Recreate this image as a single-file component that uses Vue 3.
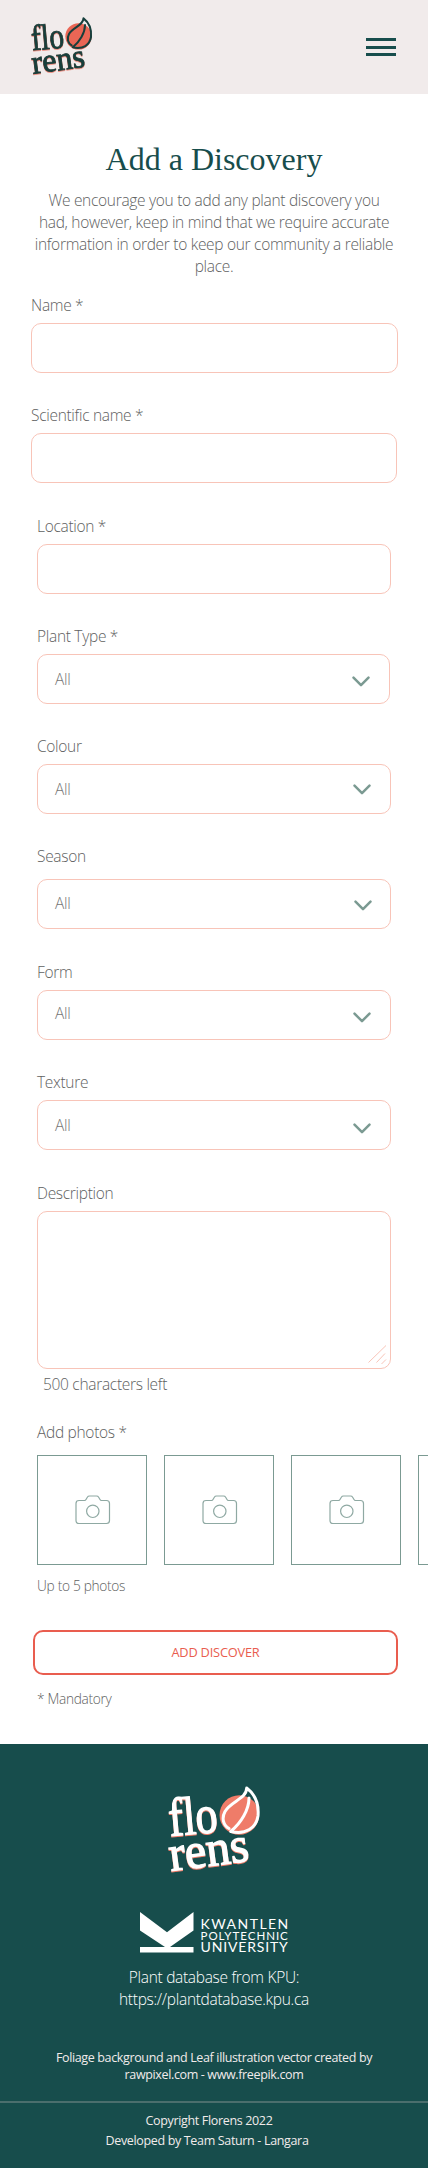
<script setup>
const fields = [
  { label: 'Name *', kind: 'text', x: 31, width: 367, top: 0 },
  { label: 'Scientific name *', kind: 'text', x: 31, width: 366, top: 31 },
  { label: 'Location *', kind: 'text', x: 37, width: 354, top: 32 },
  { label: 'Plant Type *', kind: 'select', x: 37, width: 353, top: 31, text: 0, arrow: [19.5, 2.3] },
  { label: 'Colour', kind: 'select', x: 37, width: 354, top: 31, text: 0, arrow: [19.5, 0.5] },
  { label: 'Season', kind: 'select', x: 37, width: 354, top: 31, gap: 12, text: -1, arrow: [18.5, 1.5] },
  { label: 'Form', kind: 'select', x: 37, width: 354, top: 32, text: -2, arrow: [19.5, 2.5] },
  { label: 'Texture', kind: 'select', x: 37, width: 354, top: 31, text: 0, arrow: [19.5, 3.5] },
  { label: 'Description', kind: 'area', x: 37, width: 354, top: 32 },
]
const photos = [1, 2, 3, 4, 5]
</script>

<template>
  <div class="page">
    <header class="topbar">
      <svg class="logo logo-small" viewBox="-1 -1 94 90">
        <circle class="sun" cx="70.3" cy="28" r="19.8" />
        <g class="words">
          <text transform="translate(1 49) rotate(-5)" textLength="49" lengthAdjust="spacingAndGlyphs">flo</text>
          <text class="rens" transform="translate(2 84) rotate(-7.5)" textLength="80" lengthAdjust="spacingAndGlyphs">rens</text>
        </g>
        <path class="leaf" d="M60 41.5C54 38 52.500 31 56 24.500C62 14 77.500 12 77.700 1C87 8 90 18 89 29C87 41 77 48 61.700 44.500C72 36 80 23 80 11" />
      </svg>
      <button class="menu" aria-label="Menu"><i></i><i></i><i></i></button>
    </header>

    <main>
      <h1>Add a Discovery</h1>
      <p class="intro">
        We encourage you to add any plant discovery you<br />
        had, however, keep in mind that we require accurate<br />
        information in order to keep our community a reliable<br />
        place.
      </p>

      <form>
        <div
          v-for="f in fields"
          :key="f.label"
          class="field"
          :style="{ marginTop: f.top + 'px', marginLeft: f.x + 'px', width: f.width + 'px', gap: (f.gap || 7) + 'px' }"
        >
          <label>{{ f.label }}</label>
          <input v-if="f.kind === 'text'" class="box" type="text" />
          <div v-else-if="f.kind === 'select'" class="box select">
            <span :style="{ marginTop: f.text * 2 + 'px' }">All</span>
            <svg
              width="18"
              height="11"
              viewBox="0 0 18 11"
              :style="{ marginRight: f.arrow[0] + 'px', marginTop: f.arrow[1] * 2 + 'px' }"
            >
              <path d="M1.500 1.600L9 9.200L16.500 1.600" />
            </svg>
          </div>
          <div v-else class="box area">
            <svg width="19" height="20" viewBox="0 0 19 20">
              <path d="M.5 17.500L18 .5M8.500 17.500L17 8.500M13.500 19L18 14.500" />
            </svg>
          </div>
        </div>

        <p class="counter">500 characters left</p>
        <p class="photo-label">Add photos *</p>
        <div class="photos">
          <div v-for="p in photos" :key="p" class="photo">
            <svg width="36" height="30" viewBox="0 0 36 30">
              <path d="M4 5.500H9.500Q10.500 5.500 11 4.500L12.500 2Q13 1 14.500 1H21.500Q23 1 23.500 2L25 4.500Q25.500 5.500 26.500 5.500H31.500Q34.500 5.500 34.500 8.500V25.500Q34.500 28.500 31.500 28.500H4Q1 28.500 1 25.500V8.500Q1 5.500 4 5.500Z" />
              <circle cx="17.800" cy="16.300" r="6.200" />
            </svg>
          </div>
        </div>
        <p class="note limit">Up to 5 photos</p>
        <button class="submit" type="button">ADD DISCOVER</button>
        <p class="note mandatory">* Mandatory</p>
      </form>
    </main>

    <footer>
      <svg class="logo logo-large" viewBox="-1 -1 94 90">
        <circle class="sun" cx="70.3" cy="28" r="19.8" />
        <g class="words">
          <text transform="translate(1 49) rotate(-5)" textLength="49" lengthAdjust="spacingAndGlyphs">flo</text>
          <text class="rens" transform="translate(2 84) rotate(-7.5)" textLength="80" lengthAdjust="spacingAndGlyphs">rens</text>
        </g>
        <path class="leaf" d="M60 41.5C54 38 52.500 31 56 24.500C62 14 77.500 12 77.700 1C87 8 90 18 89 29C87 41 77 48 61.700 44.500C72 36 80 23 80 11" />
      </svg>

      <svg class="kpu" width="148" height="42" viewBox="0 0 148 42">
        <path d="M0 0L27 20.300L53.500 0V18.500L30 35H53.500V40.500H0V35H25L0 18.500Z" />
        <text class="kpu-big" x="60.500" y="16.500" textLength="87.500">KWANTLEN</text>
        <text class="kpu-thin" x="60.500" y="27.500" textLength="87">POLYTECHNIC</text>
        <text class="kpu-big" x="60.500" y="40.300" textLength="87">UNIVERSITY</text>
      </svg>

      <p class="database">
        Plant database from KPU:<br />
        https://plantdatabase.kpu.ca
      </p>
      <p class="credits">
        Foliage background and Leaf illustration vector created by<br />
        rawpixel.com - www.freepik.com
      </p>
      <div class="legal">
        <p class="copy">Copyright Florens 2022</p>
        <p class="team">Developed by Team Saturn - Langara</p>
      </div>
    </footer>
  </div>
</template>

<style>
body {
  margin: 0;
  background: #fff;
}
</style>

<style scoped>
.page {
  width: 428px;
  height: 2168px;
  overflow: hidden;
  display: flex;
  flex-direction: column;
  color: #606161;
  font: 300 15.500px/22px "Open Sans", "Noto Sans", sans-serif;
  letter-spacing: -0.3px;
}
p,
h1 {
  margin: 0;
}
.topbar {
  height: 94px;
  box-sizing: border-box;
  padding: 0 32px 0 31px;
  background: #f1ebeb;
  display: flex;
  align-items: center;
  justify-content: space-between;
}
.logo {
  display: block;
  overflow: visible;
}
.logo-small {
  width: 62.700px;
  height: 60px;
  color: #173f3c;
  --coral: #ea6655;
}
.logo-large {
  width: 94px;
  height: 90px;
  color: #fff;
  --coral: #ef7c69;
}
.sun {
  fill: var(--coral);
}
.words {
  fill: currentColor;
  stroke: currentColor;
  stroke-width: 1.300;
  font: 400 54px "Liberation Serif", serif;
  letter-spacing: 0;
  filter: drop-shadow(0.7px 1.2px 0 var(--coral));
}
.rens {
  font-size: 50px;
}
.leaf {
  fill: none;
  stroke: currentColor;
  stroke-width: 3;
  stroke-linecap: round;
  stroke-linejoin: round;
}
.menu {
  width: 30px;
  padding: 0;
  border: 0;
  background: none;
  display: flex;
  flex-direction: column;
  gap: 4.500px;
}
.menu i {
  height: 3px;
  background: #174d4c;
}
main {
  height: 1650px;
}
h1 {
  padding-top: 42px;
  height: 53px;
  text-align: center;
  color: #174d4c;
  font: 400 32px/46px "Liberation Serif", serif;
  letter-spacing: 0;
}
.intro {
  text-align: center;
  white-space: nowrap;
}
.field {
  display: flex;
  flex-direction: column;
}
form {
  padding-top: 17px;
}
label {
  display: block;
}
.box {
  box-sizing: border-box;
  width: 100%;
  height: 50px;
  margin: 0;
  border: 1px solid #f8c4b8;
  border-radius: 10px;
  background: #fff;
}
.select {
  display: flex;
  align-items: center;
  justify-content: space-between;
  padding-left: 17px;
  color: #747575;
}
.select path {
  fill: none;
  stroke: #7b9a92;
  stroke-width: 2.500;
  stroke-linecap: round;
  stroke-linejoin: round;
}
.area {
  height: 158px;
  display: flex;
  align-items: flex-end;
  justify-content: flex-end;
  padding: 0 3px 3px;
}
.area path {
  fill: none;
  stroke: #f8c4b8;
}
.counter {
  margin: 4px 0 0 43px;
}
.photo-label {
  margin: 26px 0 12px 37px;
}
.photos {
  display: flex;
  gap: 17px;
  margin-left: 37px;
  overflow: hidden;
}
.photo {
  box-sizing: border-box;
  flex: 0 0 110px;
  height: 110px;
  padding-left: 1px;
  border: 1px solid #7b9a92;
  display: flex;
  align-items: center;
  justify-content: center;
}
.photo svg {
  fill: none;
  stroke: #8fa9a3;
  stroke-width: 1.200;
}
.note {
  margin-left: 37px;
  font-size: 13.700px;
  line-height: 19px;
}
.limit {
  margin-top: 11px;
}
.submit {
  display: block;
  width: 365px;
  height: 45px;
  margin: 35px 0 14px 33px;
  padding: 0 0 1px;
  border: 2px solid #e95d4f;
  border-radius: 10px;
  background: #fff;
  color: #e95d4f;
  font: 400 12.800px/17px "Open Sans", "Noto Sans", sans-serif;
  letter-spacing: -0.2px;
}
footer {
  height: 424px;
  background: #174d4c;
  color: #f1ebeb;
  display: flex;
  flex-direction: column;
  align-items: center;
  text-align: center;
}
.logo-large {
  margin: 42px 0 0 2px;
}
.kpu {
  margin-top: 36px;
  fill: #fff;
  overflow: visible;
}
.kpu-big {
  font: 400 14px Lato, sans-serif;
}
.kpu-thin {
  font: 400 11.500px Lato, sans-serif;
}
.database {
  margin-top: 12px;
  white-space: nowrap;
  color: #fff;
}
.credits {
  margin-top: 39px;
  font-size: 12.500px;
  line-height: 17px;
  letter-spacing: -0.36px;
  font-weight: 400;
  white-space: nowrap;
}
.legal {
  align-self: stretch;
  margin-top: 18px;
  padding-top: 8px;
  border-top: 2px solid #4b6e6d;
  font-size: 12.500px;
  line-height: 20px;
  letter-spacing: -0.34px;
  font-weight: 400;
}
.copy {
  margin-right: 10px;
}
.team {
  margin-right: 14px;
}
</style>
